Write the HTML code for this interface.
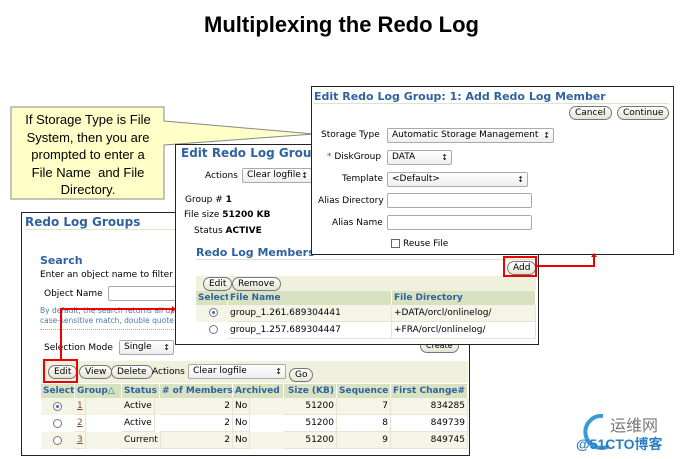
<!DOCTYPE html>
<html><head><meta charset="utf-8"><style>
*{box-sizing:border-box;margin:0;padding:0}
body{width:683px;height:459px;background:#fff;position:relative;overflow:hidden;font-family:"DejaVu Sans","Liberation Sans",sans-serif;font-size:9px;color:#000}
.a{position:absolute}
.pn{position:absolute;background:#fff;border:1.5px solid #222}
.h{color:#2f62a0;font-weight:bold;font-size:11.5px;white-space:nowrap}
.hl{border-bottom:1px solid #dde4cc}
.btn{position:absolute;height:14px;border:1px solid #777;border-radius:7px;background:linear-gradient(#fff,#e4e4d4);font-size:9px;line-height:12px;padding:0 5px;white-space:nowrap}
.sel{position:absolute;height:15px;border:1px solid #aaa;border-radius:2px;background:linear-gradient(#fff,#eee);font-size:9px;line-height:13px;padding-left:4px;white-space:nowrap}
.sel:after{content:"\2195";position:absolute;right:3px;top:0;font-size:8px}
.inp{position:absolute;height:15px;border:1px solid #aaa;border-radius:2px;background:#fff}
.bar{position:absolute;background:#f0f1dd}
.th{position:absolute;background:#d9e2c0;color:#2f62a0;font-weight:bold;font-size:9px;line-height:14px;white-space:nowrap;border-right:1px solid #fff;padding:0 2px}
.td{position:absolute;font-size:9px;line-height:16px;white-space:nowrap;border-right:1px solid #e3e6d0;border-bottom:1px solid #e3e6d0;padding:0 2px}
.r{text-align:right}
.rad{position:absolute;width:9px;height:9px;border:1px solid #777;border-radius:50%;background:#fff}
.rad.on:after{content:"";position:absolute;left:2px;top:2px;width:3px;height:3px;border-radius:50%;background:#3a6ad8}
.lbl{position:absolute;font-size:9px;white-space:nowrap}
</style></head><body>
<div class="a" style="left:0;top:12px;width:683px;text-align:center;font-family:'Liberation Sans',sans-serif;font-weight:bold;font-size:22px">Multiplexing the Redo Log</div>

<!-- callout -->
<svg class="a" style="left:0;top:0" width="330" height="210"><polygon points="11,107 164,107 164,121 314,134 164,145 164,199 11,199" fill="#ffffc8" stroke="#888" stroke-width="1"/></svg>
<div class="a" style="left:12px;top:111px;width:152px;text-align:center;font-family:'Liberation Sans',sans-serif;font-size:13px;line-height:17.5px;white-space:nowrap">If Storage Type is File<br>System, then you are<br>prompted to enter a<br>File Name&nbsp; and File<br>Directory.</div>

<!-- Redo Log Groups panel -->
<div class="pn" style="left:21px;top:212px;width:449px;height:244px">
<div class="a h hl" style="left:3px;top:2px;width:440px;font-size:12px">Redo Log Groups</div>
<div class="a h" style="left:18px;top:41px;font-size:11px">Search</div>
<div class="lbl" style="left:18px;top:57px">Enter an object name to filter the data</div>
<div class="lbl" style="left:22px;top:76px">Object Name</div>
<div class="inp" style="left:86px;top:73px;width:80px"></div>
<div class="lbl" style="left:18px;top:93px;color:#4a78b0;font-size:7.5px;line-height:10px">By default, the search returns all uppercase<br>case-sensitive match, double quote the</div>
<div class="a" style="left:18px;top:116px;width:150px;border-top:1px dotted #9ab"></div>
<div class="lbl" style="left:22px;top:130px">Selection Mode</div>
<div class="sel" style="left:97px;top:127px;width:55px">Single</div>
<div class="btn" style="left:398px;top:126px;font-size:8px">Create</div>
<div class="bar" style="left:19px;top:148px;width:427px;height:22px"></div>
<div class="btn" style="left:26px;top:152px">Edit</div>
<div class="btn" style="left:57px;top:152px">View</div>
<div class="btn" style="left:89px;top:152px">Delete</div>
<div class="lbl" style="left:130px;top:154px">Actions</div>
<div class="sel" style="left:166px;top:151px;width:98px">Clear logfile</div>
<div class="btn" style="left:267px;top:155px">Go</div>
<div class="th" style="left:19px;top:171px;width:34px">Select</div>
<div class="th" style="left:53px;top:171px;width:47px">Group△</div>
<div class="th" style="left:100px;top:171px;width:38px">Status</div>
<div class="th" style="left:138px;top:171px;width:73px;text-align:right"># of Members</div>
<div class="th" style="left:211px;top:171px;width:51px">Archived</div>
<div class="th" style="left:262px;top:171px;width:53px;text-align:right">Size (KB)</div>
<div class="th" style="left:315px;top:171px;width:54px;text-align:right">Sequence</div>
<div class="th" style="left:369px;top:171px;width:77px;text-align:right">First Change#</div>
<div class="a" style="left:19px;top:185px;width:427px;height:17px;background:#f4f5e6"></div>
<div class="a" style="left:19px;top:219px;width:427px;height:17px;background:#f4f5e6"></div>
<div class="rad on" style="left:31px;top:189px"></div><div class="rad" style="left:31px;top:206px"></div><div class="rad" style="left:31px;top:223px"></div>
<div class="td" style="left:53px;top:185px;color:#8a4a20;text-decoration:underline">1</div>
<div class="td" style="left:53px;top:202px;color:#8a4a20;text-decoration:underline">2</div>
<div class="td" style="left:53px;top:219px;color:#8a4a20;text-decoration:underline">3</div>
<div class="td" style="left:100px;top:185px">Active</div><div class="td" style="left:100px;top:202px">Active</div><div class="td" style="left:100px;top:219px">Current</div>
<div class="td r" style="left:138px;top:185px;width:73px">2</div><div class="td r" style="left:138px;top:202px;width:73px">2</div><div class="td r" style="left:138px;top:219px;width:73px">2</div>
<div class="td" style="left:211px;top:185px">No</div><div class="td" style="left:211px;top:202px">No</div><div class="td" style="left:211px;top:219px">No</div>
<div class="td r" style="left:262px;top:185px;width:53px">51200</div><div class="td r" style="left:262px;top:202px;width:53px">51200</div><div class="td r" style="left:262px;top:219px;width:53px">51200</div>
<div class="td r" style="left:315px;top:185px;width:54px">7</div><div class="td r" style="left:315px;top:202px;width:54px">8</div><div class="td r" style="left:315px;top:219px;width:54px">9</div>
<div class="td r" style="left:369px;top:185px;width:77px">834285</div><div class="td r" style="left:369px;top:202px;width:77px">849739</div><div class="td r" style="left:369px;top:219px;width:77px">849745</div>
</div>

<!-- Edit Redo Log Group panel -->
<div class="pn" style="left:175px;top:144px;width:364px;height:201px">
<div class="a h" style="left:5px;top:1px;font-size:12px">Edit Redo Log Group</div>
<div class="lbl" style="left:29px;top:26px">Actions</div>
<div class="sel" style="left:66px;top:23px;width:70px">Clear logfile</div>
<div class="lbl" style="left:9px;top:50px">Group # <b>1</b></div>
<div class="lbl" style="left:8px;top:65px">File size <b>51200 KB</b></div>
<div class="lbl" style="left:18px;top:81px">Status <b>ACTIVE</b></div>
<div class="a h hl" style="left:20px;top:101px;width:340px;font-size:11px">Redo Log Members</div>
<div class="btn" style="left:331px;top:116px">Add</div>
<div class="bar" style="left:20px;top:131px;width:340px;height:16px"></div>
<div class="btn" style="left:27px;top:132px">Edit</div>
<div class="btn" style="left:56px;top:132px">Remove</div>
<div class="th" style="left:20px;top:146px;width:32px">Select</div>
<div class="th" style="left:52px;top:146px;width:164px">File Name</div>
<div class="th" style="left:216px;top:146px;width:144px">File Directory</div>
<div class="a" style="left:20px;top:160px;width:340px;height:17px;background:#f4f5e6"></div>
<div class="rad on" style="left:33px;top:163px"></div><div class="rad" style="left:33px;top:180px"></div>
<div class="td" style="left:52px;top:160px;width:164px">group_1.261.689304441</div>
<div class="td" style="left:52px;top:177px;width:164px">group_1.257.689304447</div>
<div class="td" style="left:216px;top:160px;width:144px">+DATA/orcl/onlinelog/</div>
<div class="td" style="left:216px;top:177px;width:144px">+FRA/orcl/onlinelog/</div>
</div>

<!-- Add member panel -->
<div class="pn" style="left:311px;top:86px;width:363px;height:169px">
<div class="a h hl" style="left:2px;top:3px;width:355px;font-size:11px">Edit Redo Log Group: 1: Add Redo Log Member</div>
<div class="btn" style="left:257px;top:19px">Cancel</div>
<div class="btn" style="left:305px;top:19px">Continue</div>
<div class="lbl" style="left:9px;top:43px">Storage Type</div>
<div class="sel" style="left:75px;top:41px;width:167px">Automatic Storage Management</div>
<div class="lbl" style="left:15px;top:65px"><span style="color:#2f62a0">*</span> DiskGroup</div>
<div class="sel" style="left:75px;top:63px;width:65px">DATA</div>
<div class="lbl" style="left:30px;top:87px">Template</div>
<div class="sel" style="left:75px;top:85px;width:141px">&lt;Default&gt;</div>
<div class="lbl" style="left:6px;top:109px">Alias Directory</div>
<div class="inp" style="left:75px;top:106px;width:145px"></div>
<div class="lbl" style="left:20px;top:131px">Alias Name</div>
<div class="inp" style="left:75px;top:128px;width:145px"></div>
<div class="a" style="left:79px;top:152px;width:9px;height:9px;border:1px solid #666"></div>
<div class="lbl" style="left:91px;top:152px">Reuse File</div>
</div>

<!-- red highlights -->
<svg class="a" style="left:0;top:0" width="683" height="459">
<g fill="none" stroke="#e00" stroke-width="2">
<rect x="44" y="360" width="33" height="22"/>
<polyline points="61,360 61,309 172,309"/>
<rect x="504" y="257" width="32" height="19"/>
<polyline points="536,266 594,266 594,256"/>
</g>
<polygon points="172,306 176,309 172,312" fill="#e00"/>
<polygon points="591,257 594,253 597,257" fill="#e00"/>
</svg>

<!-- watermark -->
<svg class="a" style="left:575px;top:410px" width="40" height="45"><path d="M28,6 A16,16 0 1 0 34,36" fill="none" stroke="#3a9ad8" stroke-width="4"/></svg>
<div class="a" style="left:610px;top:412px;font-family:'Noto Sans CJK SC',sans-serif;font-size:16px;color:#777">运维网</div>
<div class="a" style="left:576px;top:434px;font-family:'Liberation Sans','Noto Sans CJK SC',sans-serif;font-size:14px;color:#2a7fc4;font-weight:bold">@51CTO博客</div>
</body></html>
